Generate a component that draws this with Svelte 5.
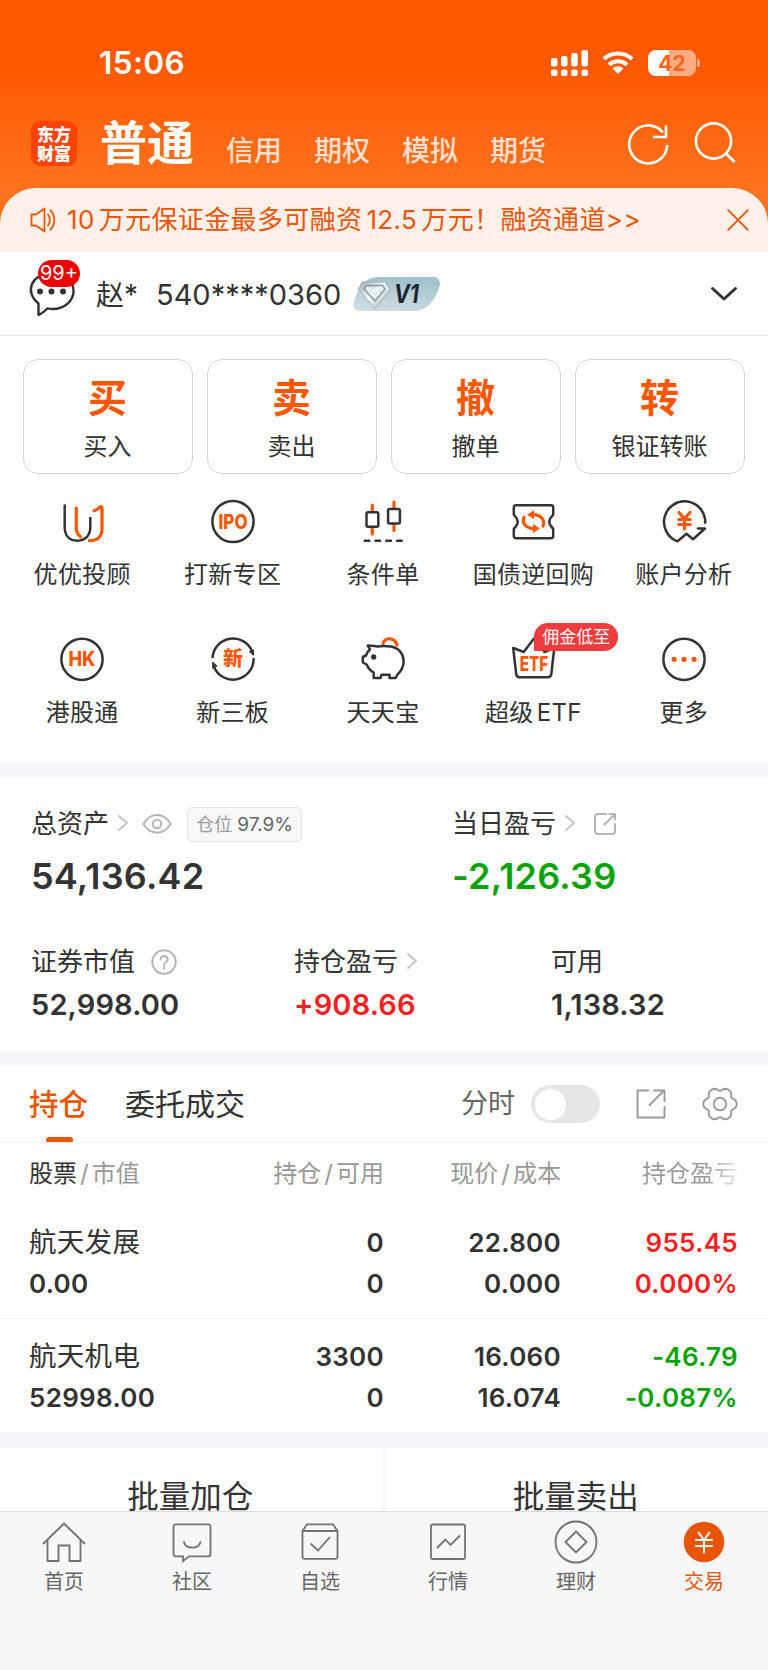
<script lang="ts">
	type Tone = 'up' | 'down';
	type Holding = {
		name: string;
		value: string;
		amount: string;
		available: string;
		price: string;
		cost: string;
		profit: string;
		rate: string;
		tone: Tone;
	};

	const markets = ['信用', '期权', '模拟', '期货'];

	const actions = [
		{ mark: '买', label: '买入' },
		{ mark: '卖', label: '卖出' },
		{ mark: '撤', label: '撤单' },
		{ mark: '转', label: '银证转账' }
	];

	const services = [
		{ icon: 'advisor', label: '优优投顾' },
		{ icon: 'ipo', label: '打新专区' },
		{ icon: 'candles', label: '条件单' },
		{ icon: 'ticket', label: '国债逆回购' },
		{ icon: 'analysis', label: '账户分析' },
		{ icon: 'hk', label: '港股通' },
		{ icon: 'newboard', label: '新三板' },
		{ icon: 'pig', label: '天天宝' },
		{ icon: 'etf', label: '超级 ETF', badge: '佣金低至' },
		{ icon: 'more', label: '更多' }
	];

	const holdings: Holding[] = [
		{
			name: '航天发展',
			value: '0.00',
			amount: '0',
			available: '0',
			price: '22.800',
			cost: '0.000',
			profit: '955.45',
			rate: '0.000%',
			tone: 'up'
		},
		{
			name: '航天机电',
			value: '52998.00',
			amount: '3300',
			available: '0',
			price: '16.060',
			cost: '16.074',
			profit: '-46.79',
			rate: '-0.087%',
			tone: 'down'
		}
	];

	const navItems = [
		{ icon: 'home', label: '首页' },
		{ icon: 'community', label: '社区' },
		{ icon: 'watchlist', label: '自选' },
		{ icon: 'quotes', label: '行情' },
		{ icon: 'wealth', label: '理财' },
		{ icon: 'trade', label: '交易' }
	];

	// six soft teeth around the settings icon
	const gearPoints = Array.from({ length: 72 }, (_, i) => {
		const a = (i / 72) * Math.PI * 2;
		const r = 15.2 + 1.7 * Math.cos(6 * a) - 0.35 * Math.cos(12 * a);
		return `${(18 + r * Math.cos(a)).toFixed(2)},${(18 + r * Math.sin(a)).toFixed(2)}`;
	}).join(' ');

	let activeNav = $state('trade');
	let activeTab = $state('持仓');
	let intraday = $state(false);
</script>

{#snippet chevron()}
	<svg class="chevron" width="12" height="18" viewBox="0 0 12 18">
		<path d="M2 2l8 7-8 7" />
	</svg>
{/snippet}

{#snippet serviceIcon(name: string)}
	<svg class="service-icon" width="50" height="50" viewBox="0 0 50 50">
		{#if name === 'advisor'}
			<path d="M7.7 9.5V31c0 9 5 13.7 12.6 13.7S33.3 40 33.3 31v-9" />
			<path class="accent" d="M19.3 12v20c0 4 1.4 6.6 4.2 8.7M37 14.7c2.8-.8 5-2.400 6.500-4.200.9 0 1.500.6 1.500 1.500V33c0 8-5 11.700-12.500 11.700" />
		{:else if name === 'ipo'}
			<circle cx="25" cy="25.5" r="20.6" />
			<text x="25" y="32.8" font-size="20" textLength="29" lengthAdjust="spacingAndGlyphs">IPO</text>
		{:else if name === 'candles'}
			<path class="accent" d="M14.3 9v6.5M14.3 32v6M36 6v6.5M36 29v5.5" />
			<rect x="8.5" y="16.2" width="11.8" height="14.6" rx="1.5" />
			<rect x="30.1" y="13" width="11.8" height="14.6" rx="1.5" />
			<path d="M6.7 44.7h38" stroke-dasharray="4.6 6.2" />
		{:else if name === 'ticket'}
			<path d="M8 9.3h35a2.2 2.2 0 0 1 2.2 2.2v7c0 1.5-4 2.5-4 7.3s4 5.8 4 7.3v7a2.2 2.2 0 0 1-2.2 2.2H8a2.2 2.2 0 0 1-2.200-2.200v-7c0-1.500 4-2.500 4-7.300s-4-5.800-4-7.300v-7A2.200 2.200 0 0 1 8 9.300z" />
			<path class="accent" d="M35 30c2.500-5.500-2-11.300-10-11.300M16 21.300c-2.500 5.500 2 11.300 10 11.300" />
			<path class="solid" d="M19 18.700l7-4.500v9zM32 32.600l-7-4.500v9z" />
		{:else if name === 'analysis'}
			<path d="M46.2 26.600A20.600 20.600 0 1 0 18.500 45.300l9-7.500 6.500 5.500 12-10.800h-7" />
			<path class="accent" d="M20 16.500l5.500 6.500 5.500-6.500M25.500 23v10M19.800 23.500h11.400M19.800 28.500h11.400" />
		{:else if name === 'hk'}
			<circle cx="25" cy="25.300" r="20.600" />
			<text x="25" y="32.300" font-size="19.500" textLength="27" lengthAdjust="spacingAndGlyphs">HK</text>
		{:else if name === 'newboard'}
			<path d="M4.600 23A20.600 20.600 0 0 1 44 17M45.600 25A20.600 20.600 0 0 1 6 33" />
			<path class="arrow" d="M41.700 17.500l3.800-1.700v5.200zM4.700 28.500v5.700l4.100-2z" />
			<text x="25" y="32.200" font-size="20">新</text>
		{:else if name === 'pig'}
			<path class="accent" d="M25 9.500c2.500-7 12-6 14 1.500" />
			<path d="M9.800 11.600c3.500.2 6.500-.1 9.700 1 4-.7 9-.7 13.500 0 8 1.400 12.600 7.400 12.600 14.600 0 6-3 10.300-6.100 13.300L37.500 44h-6v-3.200h-8L22.500 44h-6.800v-5.500c-3.200-1.800-5.700-4.500-7-8l-3.900-2V23l3.200-1.500c.8-2.500 2.200-4.500 4-6z" />
			<circle class="eye" cx="15.700" cy="23" r="1.400" />
		{:else if name === 'etf'}
			<path d="M5.200 14l10.500 4L26 4.500 36.500 18l9.800-4-3 26c-.3 2-1.500 3.300-3.500 3.300H11.600c-2 0-3.100-1.300-3.400-3.300z" />
			<text x="26" y="36.800" font-size="20" textLength="28.500" lengthAdjust="spacingAndGlyphs">ETF</text>
		{:else}
			<circle cx="25" cy="25.300" r="20.600" />
			<path class="solid" d="M12.500 25.300a2.600 2.600 0 1 0 5.200 0a2.600 2.600 0 1 0-5.200 0M22.500 25.300a2.600 2.600 0 1 0 5.200 0a2.600 2.600 0 1 0-5.200 0M32.500 25.300a2.600 2.600 0 1 0 5.200 0a2.600 2.600 0 1 0-5.200 0" />
		{/if}
	</svg>
{/snippet}

{#snippet navIcon(name: string)}
	<svg class="nav-icon" width="44" height="44" viewBox="0 0 44 44">
		{#if name === 'home'}
			<path d="M1.500 23.500L22 3.500l20.500 20M5.500 20v21H16.500V25.500h11V41H38.500V20" />
		{:else if name === 'community'}
			<path d="M5.500 4.300h33a2 2 0 0 1 2 2v28a2 2 0 0 1-2 2H19l-6 4.800v-4.800H5.500a2 2 0 0 1-2-2v-28a2 2 0 0 1 2-2z" />
			<path d="M14 22c1.500 7.500 14.500 7.500 16.500 0" />
		{:else if name === 'watchlist'}
			<path d="M4.500 11l4.500-6.700h26l4.500 6.700v26a1.800 1.800 0 0 1-1.800 1.800H6.300A1.800 1.800 0 0 1 4.500 37zM4.500 11h35M13 24l7 6.500L31.500 17.500" />
		{:else if name === 'quotes'}
			<rect x="5" y="4.500" width="34" height="34.500" rx="1.800" />
			<path d="M11.500 27.500l8-8 5 5.500 9-9" />
		{:else if name === 'wealth'}
			<circle cx="22" cy="22" r="20.500" />
			<path d="M22 11.500L32.500 22 22 32.500 11.500 22z" />
		{:else}
			<circle class="coin" cx="22" cy="22" r="20.300" />
			<path class="yen" d="M16.500 12.500L22 20l5.500-7.500M22 20v12.500M14 20h16M14 26h16" />
		{/if}
	</svg>
{/snippet}

<main class="app">
	<header class="top">
		<div class="status">
			<span class="time">15:06</span>
			<div class="status-icons">
				<svg class="white" width="38" height="28" viewBox="0 0 38 28">
					<rect x="0" y="9" width="6.500" height="8.500" rx="2" />
					<rect x="10" y="7" width="6.500" height="10.500" rx="2" />
					<rect x="20.200" y="4" width="6.500" height="13.500" rx="2" />
					<rect x="30.500" y="1" width="6.500" height="16.500" rx="2" />
					<rect x="0" y="20.500" width="6.500" height="6.500" rx="2" />
					<rect x="10" y="20.500" width="6.500" height="6.500" rx="2" />
					<rect x="20.200" y="20.500" width="6.500" height="6.500" rx="2" />
					<rect x="30.500" y="20.500" width="6.500" height="6.500" rx="2" />
				</svg>
				<svg class="wifi" width="32" height="26" viewBox="0 0 32 26">
					<path d="M1.800 9c8-7.500 20.400-7.500 28.400 0M7 14.800c5.300-4.800 12.700-4.800 18 0" />
					<path class="dot" d="M10.500 18.500c3.200-2.900 7.800-2.900 11 0L16 24z" />
				</svg>
				<div class="battery"><span>42</span></div>
			</div>
		</div>
		<div class="titlebar">
			<div class="logo"><span>东方</span><span>财富</span></div>
			<h1>普通</h1>
			<nav class="markets">
				{#each markets as market}
					<span>{market}</span>
				{/each}
			</nav>
			<svg class="line-icon" width="44" height="44" viewBox="0 0 44 44">
				<path d="M41.200 24A19 19 0 1 1 37 11.500M40 4.500v11.500H27" />
			</svg>
			<svg class="line-icon search" width="44" height="44" viewBox="0 0 44 44">
				<circle cx="20.500" cy="20" r="17.600" />
				<path d="M33 32.500l8.500 8.500" />
			</svg>
		</div>
	</header>

	<div class="notice">
		<svg class="speaker" width="26" height="26" viewBox="0 0 26 26">
			<path d="M1.500 7.500H6L14.500 1.500v23L6 18.500H1.500zM18 7.500c2.500 3 2.500 8 0 11M20.500 3.500c5 5 5 14 0 19" />
		</svg>
		<p>10<i></i>万元保证金最多可融资<i></i>12.5<i></i>万元！融资通道&gt;&gt;</p>
		<svg class="close" width="22" height="22" viewBox="0 0 22 22">
			<path d="M1.200 1.200l19.600 19.600M20.800 1.200L1.200 20.800" />
		</svg>
	</div>

	<section class="account">
		<div class="messages">
			<svg width="48" height="46" viewBox="0 0 48 46">
				<path d="M10.500 43v-11.500C-4 20 3 1.500 24 1.500c13 0 21.500 8 21.500 17.500S37 37 24.500 37c-2 0-3.500-.3-5.200-.5-2.500 2.500-5 5-8.800 6.500z" />
				<g><circle cx="12" cy="19.500" r="3" /><circle cx="23.500" cy="19.500" r="3" /><circle cx="35" cy="19.500" r="3" /></g>
			</svg>
			<span class="count">99+</span>
		</div>
		<span class="owner">赵*</span>
		<span class="number">540****0360</span>
		<div class="vip">
			<svg width="87" height="34" viewBox="0 0 87 34">
				<defs>
					<linearGradient id="vip-bg" x1="0" y1="1" x2="0.300" y2="0">
						<stop offset="0" stop-color="#d3dfe3" />
						<stop offset="1" stop-color="#a3c4cc" />
					</linearGradient>
					<linearGradient id="gem" x1="0" y1="0" x2="1" y2="1">
						<stop offset="0" stop-color="#98a8ac" />
						<stop offset="0.450" stop-color="#f3f8f8" />
						<stop offset="1" stop-color="#9cafb3" />
					</linearGradient>
				</defs>
				<path fill="url(#vip-bg)" d="M26 0H80c5 0 8 4 6.500 9C83 22 75 34 60 34H8C2 34-1 30 1 24 6 9 12 0 26 0z" />
				<path fill="url(#gem)" stroke="#9fb0b4" stroke-width="1" d="M9.500 5h23L37 12.500 22 32 5.500 12.500z" />
				<path fill="none" stroke="#8a9da1" stroke-width="1.500" d="M11 12l11 12 10-12-2.500-3.500h-16z" />
				<path fill="#dce7e9" stroke="#fff" stroke-width="1" d="M15 10.500l7 4.500 6.500-4.500 1 2L22 20l-8-7.500z" />
				<text x="41" y="26" textLength="25" lengthAdjust="spacingAndGlyphs">V1</text>
			</svg>
		</div>
		<svg class="expand" width="28" height="16" viewBox="0 0 28 16">
			<path d="M2.500 2.500L14 13 25.500 2.500" />
		</svg>
	</section>

	<section class="quick">
		<div class="actions">
			{#each actions as action}
				<button type="button" class="action">
					<strong>{action.mark}</strong>
					<span>{action.label}</span>
				</button>
			{/each}
		</div>
		<div class="services">
			{#each services as service}
				<div class="service">
					{@render serviceIcon(service.icon)}
					<span>{service.label}</span>
					{#if service.badge}
						<em>{service.badge}</em>
					{/if}
				</div>
			{/each}
		</div>
	</section>

	<section class="assets">
		<div class="totals">
			<div class="figure big">
				<div class="label">
					<span>总资产</span>
					{@render chevron()}
					<svg class="grey-icon eye-icon" width="30" height="22" viewBox="0 0 30 22">
						<path d="M1.500 11C8-1 22-1 28.500 11 22 22.500 8 22.500 1.500 11z" />
						<circle cx="15" cy="11" r="4.200" />
					</svg>
					<span class="ratio">仓位 <b>97.9%</b></span>
				</div>
				<div class="amount">54,136.42</div>
			</div>
			<div class="figure big">
				<div class="label">
					<span>当日盈亏</span>
					{@render chevron()}
					<svg class="grey-icon share-icon" width="24" height="24" viewBox="0 0 24 24">
						<path d="M13 2H5a3 3 0 0 0-3 3v14a3 3 0 0 0 3 3h14a3 3 0 0 0 3-3v-7M11.500 12.500L22 2M16.500 2H22v5.500" />
					</svg>
				</div>
				<div class="amount down">-2,126.39</div>
			</div>
		</div>
		<div class="details">
			<div class="figure">
				<div class="label">
					<span>证券市值</span>
					<svg class="grey-icon help-icon" width="26" height="26" viewBox="0 0 26 26">
						<circle cx="13" cy="13" r="11.700" />
						<path d="M9.700 10.500c0-5 7-4.500 7 0 0 2.500-3.500 3-3.500 5.500M13.200 18v1.800" />
					</svg>
				</div>
				<div class="amount">52,998.00</div>
			</div>
			<div class="figure">
				<div class="label">
					<span>持仓盈亏</span>
					{@render chevron()}
				</div>
				<div class="amount up">+908.66</div>
			</div>
			<div class="figure">
				<div class="label"><span>可用</span></div>
				<div class="amount">1,138.32</div>
			</div>
		</div>
	</section>

	<section class="positions">
		<div class="tabs">
			{#each ['持仓', '委托成交'] as tab}
				<button type="button" class="tab" class:active={activeTab === tab} onclick={() => (activeTab = tab)}>
					{tab}
				</button>
			{/each}
			<span class="switch-label">分时</span>
			<button
				type="button"
				class="switch"
				class:on={intraday}
				aria-label="分时"
				onclick={() => (intraday = !intraday)}
			></button>
			<svg class="tool" width="30" height="30" viewBox="0 0 30 30">
				<path d="M12 1.500H1.500V28.500H28.500V18M13.500 16L28 1.500M18 1.500h10.500V12" />
			</svg>
			<svg class="tool gear" width="36" height="36" viewBox="0 0 36 36">
				<polygon points={gearPoints} />
				<circle cx="18" cy="18" r="6.300" />
			</svg>
		</div>

		<div class="row head">
			<span><b>股票</b><i>/</i>市值</span>
			<span>持仓<i>/</i>可用</span>
			<span>现价<i>/</i>成本</span>
			<span class="fade">持仓盈亏</span>
		</div>
		{#each holdings as item}
			<div class="row">
				<div><span class="stock">{item.name}</span><span>{item.value}</span></div>
				<div><span>{item.amount}</span><span>{item.available}</span></div>
				<div><span>{item.price}</span><span>{item.cost}</span></div>
				<div class={item.tone}><span>{item.profit}</span><span>{item.rate}</span></div>
			</div>
		{/each}
	</section>

	<div class="batch">
		<button type="button">批量加仓</button>
		<button type="button">批量卖出</button>
	</div>

	<nav class="bottom-nav">
		{#each navItems as item}
			<button type="button" class:active={activeNav === item.icon} onclick={() => (activeNav = item.icon)}>
				{@render navIcon(item.icon)}
				<span>{item.label}</span>
			</button>
		{/each}
	</nav>
</main>

<style>
	:global(body) {
		margin: 0;
		background: #f5f7fa;
	}

	.app {
		display: flex;
		flex-direction: column;
		width: 768px;
		height: 1670px;
		overflow: hidden;
		background: #f5f7fa;
		color: #333;
		font-family: Inter, 'Noto Sans CJK SC', sans-serif;
	}

	.app :is(p, h1) {
		margin: 0;
	}

	button {
		padding: 0;
		border: 0;
		background: none;
		color: inherit;
		font: inherit;
	}

	svg {
		flex: none;
		fill: none;
		stroke-linecap: round;
		stroke-linejoin: round;
	}

	.up {
		color: #fb1f24;
	}

	.down {
		color: #08a308;
	}

	/* header */
	.top {
		flex: none;
		box-sizing: border-box;
		height: 224px;
		margin-bottom: -36px;
		background: linear-gradient(#ff5800 0, #ff5800 60px, #ff721d 190px);
		color: #fff;
	}

	.status {
		display: flex;
		align-items: center;
		justify-content: space-between;
		box-sizing: border-box;
		height: 106px;
		padding: 19px 67px 0 99px;
	}

	.time {
		font-size: 31.5px;
		font-weight: 600;
		letter-spacing: 0.4px;
	}

	.status-icons {
		display: flex;
		align-items: center;
	}

	.white {
		fill: #fff;
	}

	.wifi {
		margin: 0 14px 0 13px;
		stroke: #fff;
		stroke-width: 4;
		stroke-linecap: butt;
	}

	.wifi .dot {
		fill: #fff;
		stroke: none;
	}

	.battery {
		position: relative;
		width: 48px;
		height: 26px;
		margin-right: 5px;
		border-radius: 8px;
		background: linear-gradient(90deg, #fff 43%, #ffac84 43%);
		color: #fb651a;
		font-size: 21px;
		font-weight: 700;
		line-height: 27px;
		text-align: center;
	}

	.battery::after {
		content: '';
		position: absolute;
		top: 9px;
		right: -4px;
		width: 3px;
		height: 8px;
		border-radius: 0 4px 4px 0;
		background: #ffac84;
	}

	.titlebar {
		display: flex;
		align-items: center;
		height: 74px;
		padding: 0 31px 0 31px;
	}

	.logo {
		display: flex;
		flex-direction: column;
		justify-content: center;
		width: 46px;
		height: 45px;
		margin-right: 23px;
		border-radius: 9px;
		background: #ff4304;
		font-family: 'Noto Sans CJK SC', sans-serif;
		font-size: 17px;
		font-weight: 900;
		line-height: 19px;
		text-align: center;
	}

	h1 {
		width: 94px;
		font-size: 47px;
		font-weight: 700;
		line-height: 60px;
		white-space: nowrap;
	}

	.markets {
		display: flex;
		flex: 1;
		gap: 32px;
		margin: 15px 0 0 32px;
		color: #ffdfcf;
		font-size: 28px;
		font-weight: 500;
		line-height: 34px;
	}

	.line-icon {
		stroke: #fff;
		stroke-width: 2.6;
		stroke-linecap: butt;
		stroke-linejoin: miter;
	}

	.search {
		margin-left: 23px;
	}

	.notice {
		display: flex;
		flex: none;
		align-items: center;
		box-sizing: border-box;
		height: 64px;
		padding: 0 19px 0 30px;
		border-radius: 36px 36px 0 0;
		background: #fff0e9;
		color: #ea5504;
		font-size: 26px;
	}

	.notice p {
		flex: 1;
		margin-left: 11px;
		letter-spacing: 0.37px;
		line-height: 36px;
		white-space: nowrap;
	}

	.notice i {
		display: inline-block;
		width: 4px;
	}

	.speaker,
	.close {
		stroke: #ea5504;
		stroke-width: 1.8;
	}

	.close {
		margin-bottom: 1px;
	}

	/* account */
	.account {
		display: flex;
		flex: none;
		align-items: center;
		box-sizing: border-box;
		height: 84px;
		padding: 0 30px 0 28px;
		border-bottom: 1px solid #e9ebec;
		background: #fff;
		font-size: 28px;
		line-height: 40px;
		white-space: pre;
	}

	.messages {
		position: relative;
		width: 48px;
		height: 46px;
		margin-top: 3px;
	}

	.messages path {
		stroke: #333;
		stroke-width: 2.4;
	}

	.messages g {
		fill: #333;
	}

	.count {
		position: absolute;
		top: -12px;
		left: 10px;
		width: 42px;
		height: 27px;
		border-radius: 14px;
		background: #f00000;
		color: #fff;
		font-size: 20px;
		line-height: 27px;
		text-align: center;
	}

	.owner {
		width: 60px;
		margin: 2px 0 0 20px;
	}

	.number {
		width: 185px;
		margin-top: 2px;
		font-size: 29px;
	}

	.vip {
		height: 34px;
		margin: 0 auto 0 12px;
	}

	.vip svg {
		display: block;
	}

	.vip text {
		fill: #1c2433;
		font-size: 25px;
		font-style: italic;
		font-weight: 700;
	}

	.expand {
		stroke: #333;
		stroke-width: 3;
	}

	/* quick actions */
	.quick {
		flex: none;
		box-sizing: border-box;
		height: 426px;
		padding-top: 23px;
		background: #fff;
	}

	.actions {
		display: grid;
		grid-template-columns: repeat(4, 1fr);
		gap: 14px;
		padding: 0 23px;
	}

	.action {
		display: flex;
		flex-direction: column;
		align-items: center;
		box-sizing: border-box;
		height: 115px;
		padding: 14px 1px 0 0;
		border: 1px solid #d2d4d6;
		border-radius: 15px;
		font-size: 24px;
		line-height: 34px;
	}

	.action strong {
		margin-bottom: 8px;
		color: #ff5600;
		font-size: 39px;
		font-weight: 700;
		line-height: 48px;
	}

	.services {
		display: grid;
		grid-template-columns: repeat(5, 1fr);
		grid-auto-rows: 138px;
		padding: 22px 9px 0 7px;
	}

	.service {
		position: relative;
		display: flex;
		flex-direction: column;
		align-items: center;
		gap: 12px;
		font-size: 24px;
		letter-spacing: 0.3px;
		line-height: 34px;
		white-space: nowrap;
		word-spacing: -4px;
	}

	.service em {
		position: absolute;
		top: -11px;
		left: 76px;
		width: 84px;
		height: 28px;
		border-radius: 14px 14px 14px 0;
		background: #ee3b3d;
		color: #fff;
		font-size: 17px;
		font-style: normal;
		letter-spacing: 0;
		line-height: 28px;
		text-align: center;
	}

	.service-icon {
		stroke: #333;
		stroke-width: 2.5;
	}

	.service-icon .accent {
		stroke: #ff5600;
		stroke-width: 3.2;
	}

	.service-icon .solid {
		fill: #ff5600;
		stroke: none;
	}

	.service-icon .arrow {
		fill: #333;
		stroke-width: 1;
	}

	.service-icon .eye {
		fill: #333;
	}

	.service-icon text {
		fill: #ff5600;
		stroke: none;
		font-weight: 800;
		letter-spacing: 0;
		text-anchor: middle;
	}

	/* assets */
	.assets {
		flex: none;
		box-sizing: border-box;
		height: 273px;
		margin-top: 16px;
		padding: 26px 31px 0;
		background: #fff;
	}

	.totals {
		display: grid;
		grid-template-columns: 421px 1fr;
	}

	.details {
		display: grid;
		grid-template-columns: 263px 257px 1fr;
		margin-top: 42px;
	}

	.label {
		display: flex;
		align-items: center;
		height: 40px;
		font-size: 26px;
	}

	.label span {
		line-height: 36px;
		white-space: nowrap;
	}

	.amount {
		margin-top: 3px;
		font-size: 29px;
		font-weight: 600;
		letter-spacing: 0.15px;
		line-height: 40px;
	}

	.big .amount {
		margin-top: 8px;
		font-size: 36px;
		letter-spacing: 0.2px;
		line-height: 48px;
	}

	.chevron {
		margin: 0 0 2px 8px;
		stroke: #c2c2c2;
		stroke-width: 1.8;
	}

	.grey-icon {
		margin-bottom: 1px;
		stroke: #b5b5b5;
		stroke-width: 2;
	}

	.eye-icon {
		margin-left: 13px;
	}

	.share-icon {
		margin-left: 17px;
	}

	.help-icon {
		margin-left: 16px;
	}

	.label .ratio {
		box-sizing: border-box;
		width: 115px;
		height: 35px;
		margin: 0 0 0 15px;
		border: 1px solid #e5e6e9;
		border-radius: 5px;
		background: #f7f8fa;
		color: #999;
		font-size: 18px;
		line-height: 33px;
		text-align: center;
	}

	.ratio b {
		color: #666;
		font-size: 19px;
		font-weight: 400;
	}

	/* positions */
	.positions {
		flex: none;
		height: 366px;
		margin-top: 15px;
		background: #fff;
	}

	.tabs {
		display: flex;
		align-items: center;
		box-sizing: border-box;
		height: 77px;
		padding: 0 30px 0 29px;
		border-bottom: 1px solid #f0f1f3;
		font-size: 30px;
	}

	.tab {
		position: relative;
		height: 76px;
		margin-right: 37px;
		line-height: 77px;
		white-space: nowrap;
	}

	.tab.active {
		color: #ea5504;
		font-size: 29.5px;
		font-weight: 500;
	}

	.tab.active::after {
		content: '';
		position: absolute;
		bottom: 0;
		left: 50%;
		width: 27px;
		height: 5px;
		margin-left: -13px;
		border-radius: 3px 3px 1px 1px;
		background: #ea5504;
	}

	.switch-label {
		margin-left: auto;
		color: #666;
		font-size: 27px;
		line-height: 36px;
	}

	.switch {
		display: flex;
		align-items: center;
		width: 69px;
		height: 38px;
		margin: 0 36px 0 16px;
		padding: 0 4px;
		border-radius: 19px;
		background: #e5e6e8;
	}

	.switch::before {
		content: '';
		width: 31px;
		height: 31px;
		border-radius: 50%;
		background: #fff;
	}

	.switch.on {
		justify-content: flex-end;
		background: #ea5504;
	}

	.tool {
		stroke: #999;
		stroke-width: 1.9;
	}

	.gear {
		margin-left: 36px;
	}

	.row {
		display: grid;
		grid-template-columns: 178px 177px 177px 177px;
		box-sizing: border-box;
		height: 114px;
		padding: 17px 30px 0 29px;
		border-bottom: 1px solid #f3f4f6;
		font-size: 26px;
		font-weight: 600;
		line-height: 41px;
		text-align: right;
	}

	.row:last-child {
		border-bottom: 0;
	}

	.row > div {
		display: flex;
		flex-direction: column;
		letter-spacing: 0.3px;
	}

	.row > :first-child {
		text-align: left;
	}

	.row .stock {
		font-size: 27.5px;
		font-weight: 400;
	}

	.row.head {
		height: 62px;
		padding-top: 10px;
		border-bottom: 0;
		color: #999;
		font-size: 24px;
		font-weight: 400;
	}

	.head b {
		color: #333;
		font-weight: 400;
	}

	.head i {
		margin: 0 3px;
		font-style: normal;
	}

	.fade {
		background: linear-gradient(90deg, #999 82%, #e8e8e8 100%);
		background-clip: text;
		color: transparent;
	}

	.batch {
		display: grid;
		flex: none;
		grid-template-columns: 1fr 1fr;
		gap: 3px;
		height: 63px;
		margin-top: 16px;
		overflow: hidden;
	}

	.batch button {
		height: 98px;
		padding-right: 2px;
		background: #fff;
		font-size: 31.5px;
		line-height: 98px;
	}

	/* bottom nav */
	.bottom-nav {
		display: grid;
		flex: 1;
		grid-template-columns: repeat(6, 1fr);
		padding-top: 8px;
		border-top: 1px solid #dcdce0;
		background: #f7f7fa;
		color: #666;
		font-size: 20px;
	}

	.bottom-nav button {
		display: flex;
		flex-direction: column;
		align-items: center;
		gap: 3px;
		line-height: 30px;
	}

	.bottom-nav .active {
		color: #ea5504;
	}

	.nav-icon {
		stroke: #737373;
		stroke-width: 1.8;
		stroke-linejoin: miter;
	}

	.nav-icon .coin {
		fill: #ea5504;
		stroke: none;
	}

	.nav-icon .yen {
		stroke: #fff;
		stroke-width: 2;
	}
</style>
